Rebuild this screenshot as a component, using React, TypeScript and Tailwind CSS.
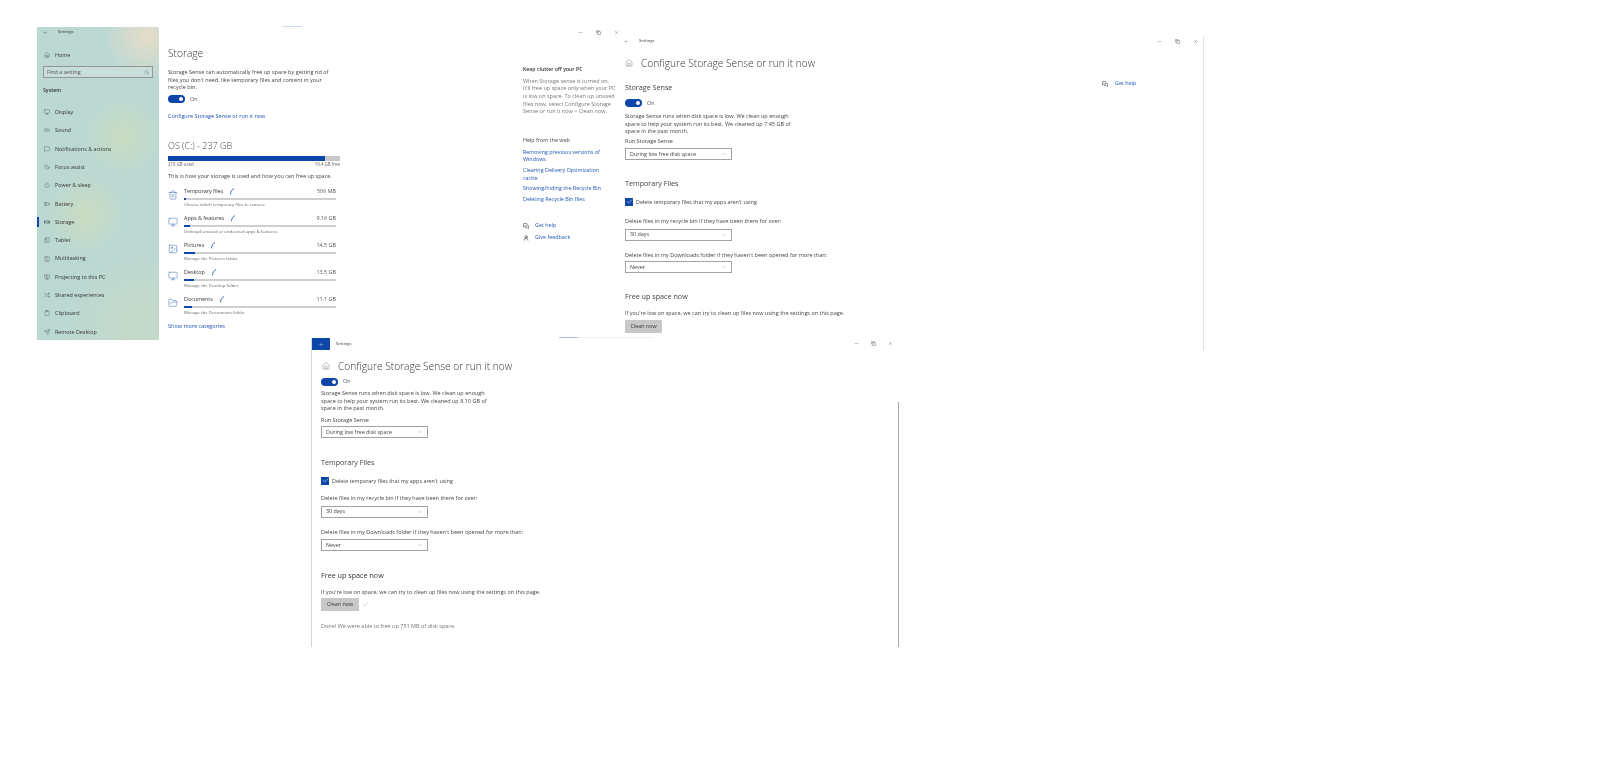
import React from "react";
import { ArrowLeft, Home, Search, Monitor, Volume2, MessageSquare, Moon, Power, BatteryMedium, TabletSmartphone, Columns2, MonitorUp, Shuffle, Clipboard, Send, Trash2, Image, FolderOpen, MessagesSquare, UserRound, Minus, Copy, X, ChevronDown, Check } from "lucide-react";

function DriveIcon({ size = 6, className = "" }: { size?: number; strokeWidth?: number; className?: string }) {
  return (
    <svg width={size} height={size} viewBox="0 0 24 24" fill="none" stroke="currentColor" strokeWidth="2" className={className}>
      <rect x="1" y="8" width="22" height="8" />
      <path d="M16 12h4" />
    </svg>
  );
}
function Arc() {
  return (
    <svg width="6" height="7" viewBox="0 0 6 7" fill="none" stroke="#2a5da8" strokeWidth="0.9">
      <path d="M5 0.6C3 1.4 1.6 3.4 1.5 6.4" />
    </svg>
  );
}

const sideItems: [any, string, boolean?][] = [
  [Monitor, "Display"], [Volume2, "Sound"], [MessageSquare, "Notifications & actions"], [Moon, "Focus assist"],
  [Power, "Power & sleep"], [BatteryMedium, "Battery"], [DriveIcon, "Storage", true], [TabletSmartphone, "Tablet"],
  [Columns2, "Multitasking"], [MonitorUp, "Projecting to this PC"], [Shuffle, "Shared experiences"], [Clipboard, "Clipboard"], [Send, "Remote Desktop"],
];
const cats: [any, string, string, string, number][] = [
  [Trash2, "Temporary files", "506 MB", "Choose which temporary files to remove", 1],
  [Monitor, "Apps & features", "9.16 GB", "Uninstall unused or undesired apps & features", 4],
  [Image, "Pictures", "14.5 GB", "Manage the Pictures folder", 7],
  [Monitor, "Desktop", "13.5 GB", "Manage the Desktop folder", 6.5],
  [FolderOpen, "Documents", "11.1 GB", "Manage the Documents folder", 5],
];

function Controls({ cls }: { cls: string }) {
  return (
    <div className={`flex items-center text-[#444] ${cls}`}>
      <Minus size={5} strokeWidth={1.5} />
      <Copy size={5} strokeWidth={2} />
      <X size={5} strokeWidth={1.5} />
    </div>
  );
}
function Toggle({ cls = "" }: { cls?: string }) {
  return (
    <div className={`flex items-center gap-[5px] ${cls}`}>
      <div className="flex h-[8px] w-[17px] items-center justify-end rounded-full bg-[#0b46a8] pr-[2px]">
        <div className="h-[4px] w-[4px] rounded-full bg-white" />
      </div>
      <span className="text-[5.4px] leading-[7px] text-[#555]">On</span>
    </div>
  );
}
function Select({ text, cls = "" }: { text: string; cls?: string }) {
  return (
    <div className={`flex h-[12px] w-[107px] items-center justify-between border border-[#a3a3a3] bg-white pl-[4px] pr-[4px] text-[5.4px] text-[#444] ${cls}`}>
      <span>{text}</span>
      <ChevronDown size={6} strokeWidth={1} className="text-[#666]" />
    </div>
  );
}
function Checkbox({ label, cls = "" }: { label: string; cls?: string }) {
  return (
    <div className={`flex items-center gap-[3px] ${cls}`}>
      <div className="flex h-[8px] w-[8px] items-center justify-center bg-[#0b46a8]">
        <Check size={7} strokeWidth={2} className="text-white" />
      </div>
      <span className="text-[5.4px] leading-[8px] text-[#444]">{label}</span>
    </div>
  );
}
function Line({ children, cls = "" }: { children: React.ReactNode; cls?: string }) {
  return <p className={`text-[5.5px] leading-[7.7px] text-[#444] ${cls}`}>{children}</p>;
}

function WindowOne() {
  return (
    <div className="absolute left-[37px] top-[27px] flex h-[313px] w-[585px]">
      <aside className="flex w-[122px] flex-col overflow-hidden bg-[#bcd8d3] bg-[radial-gradient(circle_at_90%_3%,#e6ddc8_0,transparent_13%),radial-gradient(circle_at_70%_35%,#c8dcc0_0,transparent_18%),radial-gradient(circle_at_40%_60%,#cadcc0_0,transparent_20%),radial-gradient(circle_at_85%_95%,#c5d9c8_0,transparent_25%)] text-[#333]">
        <div className="flex h-[10px] shrink-0 items-center gap-[10px] pl-[6px] text-[4.2px]">
          <ArrowLeft size={5} strokeWidth={1.2} />
          <span>Settings</span>
        </div>
        <div className="mt-[14px] flex h-[8px] shrink-0 items-center gap-[5px] pl-[7px] text-[5.4px]">
          <Home size={6} strokeWidth={1.2} />
          <span>Home</span>
        </div>
        <div className="mx-[6px] mt-[7px] flex h-[12px] shrink-0 items-center justify-between border border-[#969696] bg-[#c9ded9] px-[3px] text-[5.4px] text-[#555]">
          <span>Find a setting</span>
          <Search size={5} strokeWidth={1.2} />
        </div>
        <div className="mt-[8.5px] h-[7px] shrink-0 pl-[6px] text-[5.2px] font-semibold leading-[7px]">System</div>
        <div className="mt-[9.5px] flex shrink-0 flex-col">
          {sideItems.map(([I, t, on]) => (
            <div key={t} className="flex h-[18.3px] shrink-0 items-center">
              <div className={`h-[10px] w-[2px] ${on ? "bg-[#0b46a8]" : ""}`} />
              <I size={6} strokeWidth={1.2} className="ml-[5px]" />
              <span className="ml-[5px] text-[5.4px]">{t}</span>
            </div>
          ))}
        </div>
      </aside>
      <main className="relative w-[181px] pl-[9px] pt-[19px]">
        <h1 className="text-[10.2px] font-light leading-[14px] text-[#333]">Storage</h1>
        <Line cls="mt-[9px] w-[168px]">Storage Sense can automatically free up space by getting rid of files you don't need, like temporary files and content in your recycle bin.</Line>
        <Toggle cls="mt-[3px]" />
        <p className="mt-[9px] text-[5.5px] leading-[8px] text-[#1f55b5]">Configure Storage Sense or run it now</p>
        <h2 className="mt-[20px] text-[9px] font-light leading-[12px] text-[#444]">OS (C:) - 237 GB</h2>
        <div className="mt-[4px] h-[5px] w-[172px] bg-[#c8c8c8]">
          <div className="h-full w-[157px] bg-[#0b46a8]" />
        </div>
        <div className="mt-0 flex w-[172px] justify-between text-[4.4px] leading-[6px] text-[#666]">
          <span>218 GB used</span><span>19.4 GB free</span>
        </div>
        <Line cls="mt-[6px] whitespace-nowrap">This is how your storage is used and how you can free up space.</Line>
        <div className="mt-[7px] flex flex-col">
          {cats.map(([I, t, s, d, p]) => (
            <div key={t} className="flex h-[27px] items-start">
              <I size={10} strokeWidth={1.1} className="mt-[2.5px] shrink-0 text-[#2a5da8]" />
              <div className="ml-[6px] w-[152px]">
                <div className="flex h-[7px] items-center justify-between text-[5.4px] text-[#333]">
                  <span className="flex items-center gap-[6px]">{t}<Arc /></span>
                  <span className="text-[#555]">{s}</span>
                </div>
                <div className="mt-[3px] h-[2px] w-full bg-[#cfcfcf]">
                  <div className="h-full bg-[#0b46a8]" style={{ width: `${p}%` }} />
                </div>
                <p className="mt-[1px] text-[4.3px] leading-[6px] text-[#666]">{d}</p>
              </div>
            </div>
          ))}
        </div>
        <p className="mt-0 text-[5.5px] leading-[7px] text-[#1f55b5]">Show more categories</p>
      </main>
      <section className="relative pl-[183px] pt-[39px]">
        <div className="w-[93px]">
          <h3 className="text-[5.2px] font-semibold leading-[7px] text-[#333]">Keep clutter off your PC</h3>
          <Line cls="mt-[4.5px] whitespace-nowrap text-[#777]">When Storage sense is turned on,<br />it'll free up space only when your PC<br />is low on space. To clean up unused<br />files now, select Configure Storage<br />Sense or run it now &gt; Clean now.</Line>
          <h3 className="mt-[20.5px] text-[5.4px] leading-[7px] text-[#444]">Help from the web</h3>
          <div className="mt-[5px] flex flex-col gap-[3px] text-[5.4px] leading-[7.7px] text-[#1f55b5]">
            <p className="w-[88px]">Removing previous versions of Windows</p>
            <p className="w-[88px]">Clearing Delivery Optimization cache</p>
            <p>Showing/hiding the Recycle Bin</p>
            <p>Deleting Recycle Bin files</p>
          </div>
          <div className="mt-[18.5px] flex items-center gap-[6px] text-[5.4px] leading-[7px] text-[#1f55b5]"><MessagesSquare size={6} className="text-[#222]" />Get help</div>
          <div className="mt-[5px] flex items-center gap-[6px] text-[5.4px] leading-[7px] text-[#1f55b5]"><UserRound size={6} className="text-[#222]" />Give feedback</div>
        </div>
      </section>
      <Controls cls="absolute left-[541px] top-[3px] gap-[13px]" />
    </div>
  );
}

function WindowTwo() {
  return (
    <div className="absolute left-[612px] top-[36px] h-[314px] w-[592px] border-r border-[#e3e3e3] pl-[13px]">
      <div className="flex h-[10px] items-center gap-[10px] text-[4.2px] text-[#444]">
        <ArrowLeft size={5} strokeWidth={1.2} className="ml-[-1px]" />
        <span>Settings</span>
      </div>
      <div className="mt-[11px] flex items-center gap-[8px]">
        <Home size={8} strokeWidth={1} className="text-[#444]" />
        <h1 className="text-[10.2px] font-light leading-[12px] text-[#333]">Configure Storage Sense or run it now</h1>
      </div>
      <h2 className="mt-[13px] text-[7.2px] leading-[10px] text-[#444]">Storage Sense</h2>
      <Toggle cls="mt-[7px]" />
      <Line cls="mt-[6px] w-[170px]">Storage Sense runs when disk space is low. We clean up enough space to help your system run its best. We cleaned up 7.45 GB of space in the past month.</Line>
      <Line cls="mt-[2px]">Run Storage Sense</Line>
      <Select text="During low free disk space" cls="mt-[2px]" />
      <h2 className="mt-[18.5px] text-[7.2px] leading-[10px] text-[#444]">Temporary Files</h2>
      <Checkbox cls="mt-[9.5px]" label="Delete temporary files that my apps aren't using" />
      <Line cls="mt-[12px]">Delete files in my recycle bin if they have been there for over:</Line>
      <Select text="30 days" cls="mt-[3px]" />
      <Line cls="mt-[11px]">Delete files in my Downloads folder if they haven't been opened for more than:</Line>
      <Select text="Never" cls="mt-[2px]" />
      <h2 className="mt-[18px] text-[7.2px] leading-[10px] text-[#444]">Free up space now</h2>
      <Line cls="mt-[9px] whitespace-nowrap">If you're low on space, we can try to clean up files now using the settings on this page.</Line>
      <button className="mt-[2px] block h-[13px] w-[37px] bg-[#c8c8c8] text-[5.4px] text-[#333]">Clean now</button>
      <Controls cls="absolute left-[545px] top-[3px] gap-[13px]" />
      <div className="absolute left-[490px] top-[44px] flex items-center gap-[7px] text-[5.4px] leading-[7px] text-[#1f55b5]"><MessagesSquare size={6} className="text-[#222]" />Get help</div>
    </div>
  );
}

function WindowThree() {
  return (
    <div className="absolute left-[311px] top-[338px] h-[309px] w-[588px] border-l border-[#d6d6d6]">
      <div className="flex h-[12px] items-center">
        <div className="flex h-[12px] w-[18px] items-center justify-center bg-[#0b46a8] text-white"><ArrowLeft size={5} strokeWidth={1.5} /></div>
        <span className="ml-[6px] text-[4.2px] text-[#444]">Settings</span>
      </div>
      <div className="pl-[9px]">
        <div className="mt-[10px] flex items-center gap-[8px] pl-[1px]">
          <Home size={8} strokeWidth={1} className="text-[#444]" />
          <h1 className="text-[10.2px] font-light leading-[12px] text-[#333]">Configure Storage Sense or run it now</h1>
        </div>
        <Toggle cls="mt-[5.5px]" />
        <Line cls="mt-[4.5px] w-[170px]">Storage Sense runs when disk space is low. We clean up enough space to help your system run its best. We cleaned up 8.10 GB of space in the past month.</Line>
        <Line cls="mt-[4px]">Run Storage Sense</Line>
        <Select text="During low free disk space" cls="mt-[1.5px]" />
        <h2 className="mt-[18.5px] text-[7.2px] leading-[10px] text-[#444]">Temporary Files</h2>
        <Checkbox cls="mt-[10px]" label="Delete temporary files that my apps aren't using" />
        <Line cls="mt-[10px]">Delete files in my recycle bin if they have been there for over:</Line>
        <Select text="30 days" cls="mt-[3px]" />
        <Line cls="mt-[11px]">Delete files in my Downloads folder if they haven't been opened for more than:</Line>
        <Select text="Never" cls="mt-[3px]" />
        <h2 className="mt-[19px] text-[7.2px] leading-[10px] text-[#333]">Free up space now</h2>
        <Line cls="mt-[9px] whitespace-nowrap">If you're low on space, we can try to clean up files now using the settings on this page.</Line>
        <div className="mt-[1px] flex items-center gap-[3px]">
          <button className="block h-[13px] w-[38px] bg-[#c8c8c8] text-[5.4px] text-[#333]">Clean now</button>
          <Check size={7} strokeWidth={0.9} className="text-[#555]" />
        </div>
        <Line cls="mt-[12px] text-[#777]">Done! We were able to free up 751 MB of disk space.</Line>
      </div>
      <Controls cls="absolute left-[542px] top-[3px] gap-[12px]" />
      <div className="absolute left-[586px] top-[64px] h-[245px] w-px bg-[#a8a8a8]" />
    </div>
  );
}

export default function App() {
  return (
    <div className="relative h-[778px] w-[1600px] overflow-hidden bg-white font-['Open_Sans','Noto_Sans',sans-serif] blur-[0.4px]">
      <div className="absolute left-[283px] top-[26px] h-px w-[19px] bg-[#c9daf5]" />
      <WindowOne />
      <WindowTwo />
      <WindowThree />
      <div className="absolute left-[559px] top-[337px] h-px w-[93px] bg-[#eeeeee]">
        <div className="h-px w-[19px] bg-[#a9c4ee]" />
      </div>
    </div>
  );
}
